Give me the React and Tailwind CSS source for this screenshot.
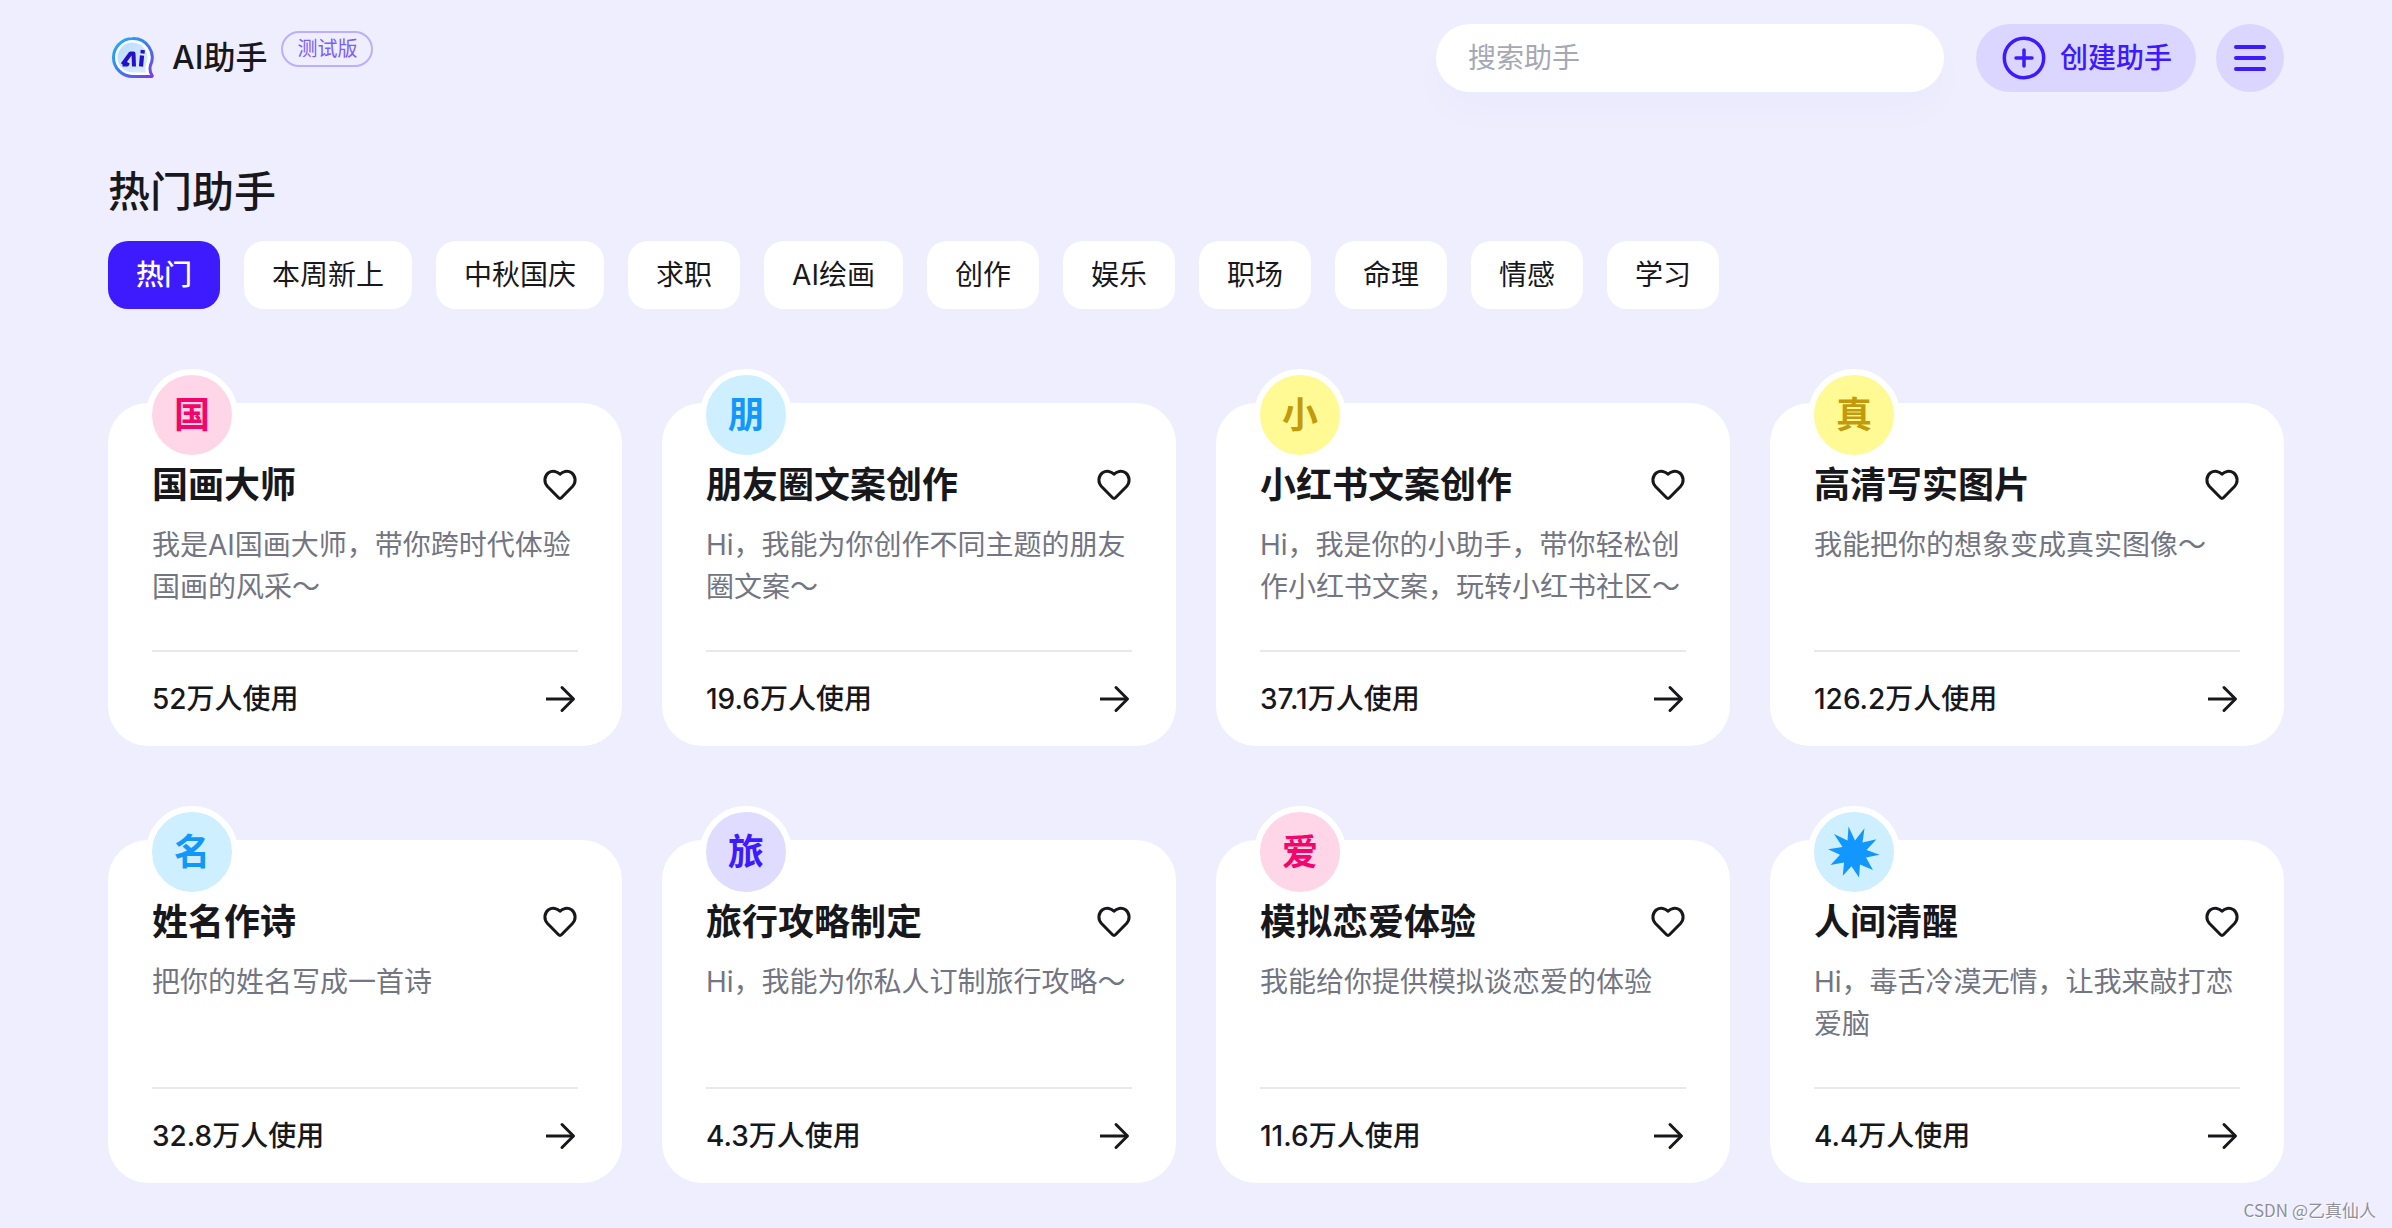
const tabs = ['热门', '本周新上', '中秋国庆', '求职', 'AI绘画', '创作', '娱乐', '职场', '命理', '情感', '学习'];

const palettes = {
  pink: 'bg-[#ffd6e8] text-[#f5056b]',
  blue: 'bg-[#cdefff] text-[#1296ff]',
  yellow: 'bg-[#fffa94] text-[#c29a0c]',
  purple: 'bg-[#e0dcff] text-[#3d1aff]',
};

const assistants = [
  { mark: '国', palette: 'pink', name: '国画大师', desc: '我是AI国画大师，带你跨时代体验国画的风采～', users: '52' },
  { mark: '朋', palette: 'blue', name: '朋友圈文案创作', desc: 'Hi，我能为你创作不同主题的朋友圈文案～', users: '19.6' },
  { mark: '小', palette: 'yellow', name: '小红书文案创作', desc: 'Hi，我是你的小助手，带你轻松创作小红书文案，玩转小红书社区～', users: '37.1' },
  { mark: '真', palette: 'yellow', name: '高清写实图片', desc: '我能把你的想象变成真实图像～', users: '126.2' },
  { mark: '名', palette: 'blue', name: '姓名作诗', desc: '把你的姓名写成一首诗', users: '32.8' },
  { mark: '旅', palette: 'purple', name: '旅行攻略制定', desc: 'Hi，我能为你私人订制旅行攻略～', users: '4.3' },
  { mark: '爱', palette: 'pink', name: '模拟恋爱体验', desc: '我能给你提供模拟谈恋爱的体验', users: '11.6' },
  { mark: null, palette: 'blue', name: '人间清醒', desc: 'Hi，毒舌冷漠无情，让我来敲打恋爱脑', users: '4.4' },
];

function Logo() {
  return (
    <svg viewBox="0 0 48 48" className="size-12" aria-hidden="true">
      <defs>
        <linearGradient id="logoRing" x1="0" y1="0" x2="1" y2="1">
          <stop offset="0" stopColor="#22b4f5" />
          <stop offset="0.5" stopColor="#3a7cf0" />
          <stop offset="1" stopColor="#7a3cf0" />
        </linearGradient>
        <linearGradient id="logoFill" x1="0" y1="0" x2="1" y2="1">
          <stop offset="0" stopColor="#b9dcff" />
          <stop offset="1" stopColor="#dcecff" />
        </linearGradient>
      </defs>
      <path d="M24.500 4.500a19 19 0 1 0 0 38H43.500c.8 0 1-.8.5-1.400-2-2.600-2.400-6-1.600-9.600A19 19 0 0 0 24.500 4.500z" fill="#fff" stroke="url(#logoRing)" strokeWidth="3" />
      <path d="M24.500 8.500a15 15 0 1 0 0 30h13.500c-.8-3-.5-6 .4-9.200A15 15 0 0 0 24.500 8.500z" fill="url(#logoFill)" />
      <path d="M14.500 30.500L22.500 19.500H25.500L26 32.500M20 28.500L19 30.500H14.500" fill="none" stroke="#2410c8" strokeWidth="4" strokeLinejoin="round" />
      <path d="M34 21.500L33 32.500M34.800 16L34.500 19.500" fill="none" stroke="#2410c8" strokeWidth="4.200" />
    </svg>
  );
}

function PlusCircle() {
  return (
    <svg viewBox="0 0 44 44" className="size-11" fill="none" stroke="currentColor" strokeWidth="3.500" strokeLinecap="round" aria-hidden="true">
      <circle cx="22" cy="22" r="19.700" />
      <path d="M22 14v16M14 22h16" />
    </svg>
  );
}

function Heart() {
  return (
    <svg viewBox="0 0 36 36" className="size-9" fill="none" stroke="currentColor" strokeWidth="3" strokeLinejoin="round" aria-hidden="true">
      <path d="M18 7.200C15.500 4.500 10.500 3 6.500 5.800C2 9.200 1.800 15.500 5.500 19.500L16.600 30.800Q18 32.200 19.400 30.800L30.500 19.500C34.200 15.500 34 9.200 29.500 5.800C25.500 3 20.500 4.500 18 7.200Z" />
    </svg>
  );
}

function Arrow() {
  return (
    <svg viewBox="0 0 36 36" className="size-9" fill="none" stroke="currentColor" strokeWidth="3" aria-hidden="true">
      <path d="M4 18h27" />
      <path d="M20 6.500L31.500 18L20 29.500" strokeLinejoin="round" strokeLinecap="round" />
    </svg>
  );
}

function Burst() {
  return (
    <svg viewBox="0 0 80 80" className="size-20" fill="currentColor" aria-hidden="true">
      <path d="M34.500 14.500L41 28.500L50.500 16.300L48.500 30.500L62.500 27.300L52.500 38L65.500 42.700L52 45.500L59 58L46 52.500L45 65.500L37.500 54.300L28.800 63.700L30 50.500L16.500 53L26 42.800L14 37.300L28.500 35L20 22L33.500 28.500Z" />
    </svg>
  );
}

function Card({ item }) {
  return (
    <article className="rounded-[40px] bg-white px-11 pb-[26px]">
      <div className={`-mt-[34px] -ml-1.5 box-content flex size-20 items-center justify-center rounded-full border-6 border-white text-4xl font-bold ${palettes[item.palette]}`}>
        {item.mark ?? <Burst />}
      </div>
      <div className="flex h-12 items-center justify-between">
        <h2 className="text-4xl leading-[50px] font-bold">{item.name}</h2>
        <button type="button" aria-label={`收藏${item.name}`}><Heart /></button>
      </div>
      <p className="mt-[15px] h-[102px] text-[28px] leading-[42px] text-[#737582]">{item.desc}</p>
      <a href="#" className="mt-6 flex items-center justify-between border-t-2 border-[#e9e9e9] pt-[26px] text-[28px] leading-[42px] font-medium">
        {item.users}万人使用
        <Arrow />
      </a>
    </article>
  );
}

export default function App() {
  return (
    <div className="relative min-h-screen bg-[#efeefe] px-[108px] pt-6 pb-[45px] font-['Inter','Noto_Sans_CJK_SC',sans-serif] text-[#18181c]">
      <header className="flex items-center justify-between">
        <div className="flex items-center">
          <Logo />
          <span className="ml-4 text-[32px] leading-10 font-medium">AI助手</span>
          <span className="mb-[18px] ml-3.5 rounded-full border-2 border-[#bdaeff] px-3.5 text-xl leading-8 text-[#7a5cff]">测试版</span>
        </div>
        <div className="flex items-center">
          <input
            type="search"
            aria-label="搜索助手"
            placeholder="搜索助手"
            className="h-[68px] w-[508px] rounded-full bg-white px-8 text-[28px] shadow-[0_20px_40px_rgba(61,26,255,0.02)] outline-none placeholder:text-[#a6a8b3]"
          />
          <button type="button" className="ml-8 flex h-[68px] items-center gap-3.5 rounded-full bg-[#dad6ff] pr-6 pl-[26px] text-[28px] font-medium text-[#3d1aff]">
            <PlusCircle />
            创建助手
          </button>
          <button type="button" aria-label="菜单" className="ml-5 flex size-[68px] flex-col items-center justify-center gap-[7px] rounded-full bg-[#dad6ff]">
            <span className="h-1 w-8 rounded-full bg-[#3d1aff]" />
            <span className="h-1 w-8 rounded-full bg-[#3d1aff]" />
            <span className="h-1 w-8 rounded-full bg-[#3d1aff]" />
          </button>
        </div>
      </header>
      <main>
        <h1 className="mt-[70px] text-[42px] leading-[60px] font-medium">热门助手</h1>
        <nav className="mt-[19px] flex flex-wrap gap-6">
          {tabs.map((tab, i) => (
            <button
              key={tab}
              type="button"
              className={`h-[68px] rounded-[20px] px-7 text-[28px] ${i === 0 ? 'bg-[#3d1aff] font-medium text-white' : 'bg-white'}`}
            >
              {tab}
            </button>
          ))}
        </nav>
        <section className="mt-[94px] grid grid-cols-4 gap-x-10 gap-y-[94px]">
          {assistants.map((item) => <Card key={item.name} item={item} />)}
        </section>
      </main>
      <footer className="absolute right-4 bottom-1.5 font-['Noto_Sans_CJK_SC',sans-serif] text-[17px] leading-6 text-[#8f8f98] [text-shadow:1px_1px_0_white]">CSDN @乙真仙人</footer>
    </div>
  );
}
